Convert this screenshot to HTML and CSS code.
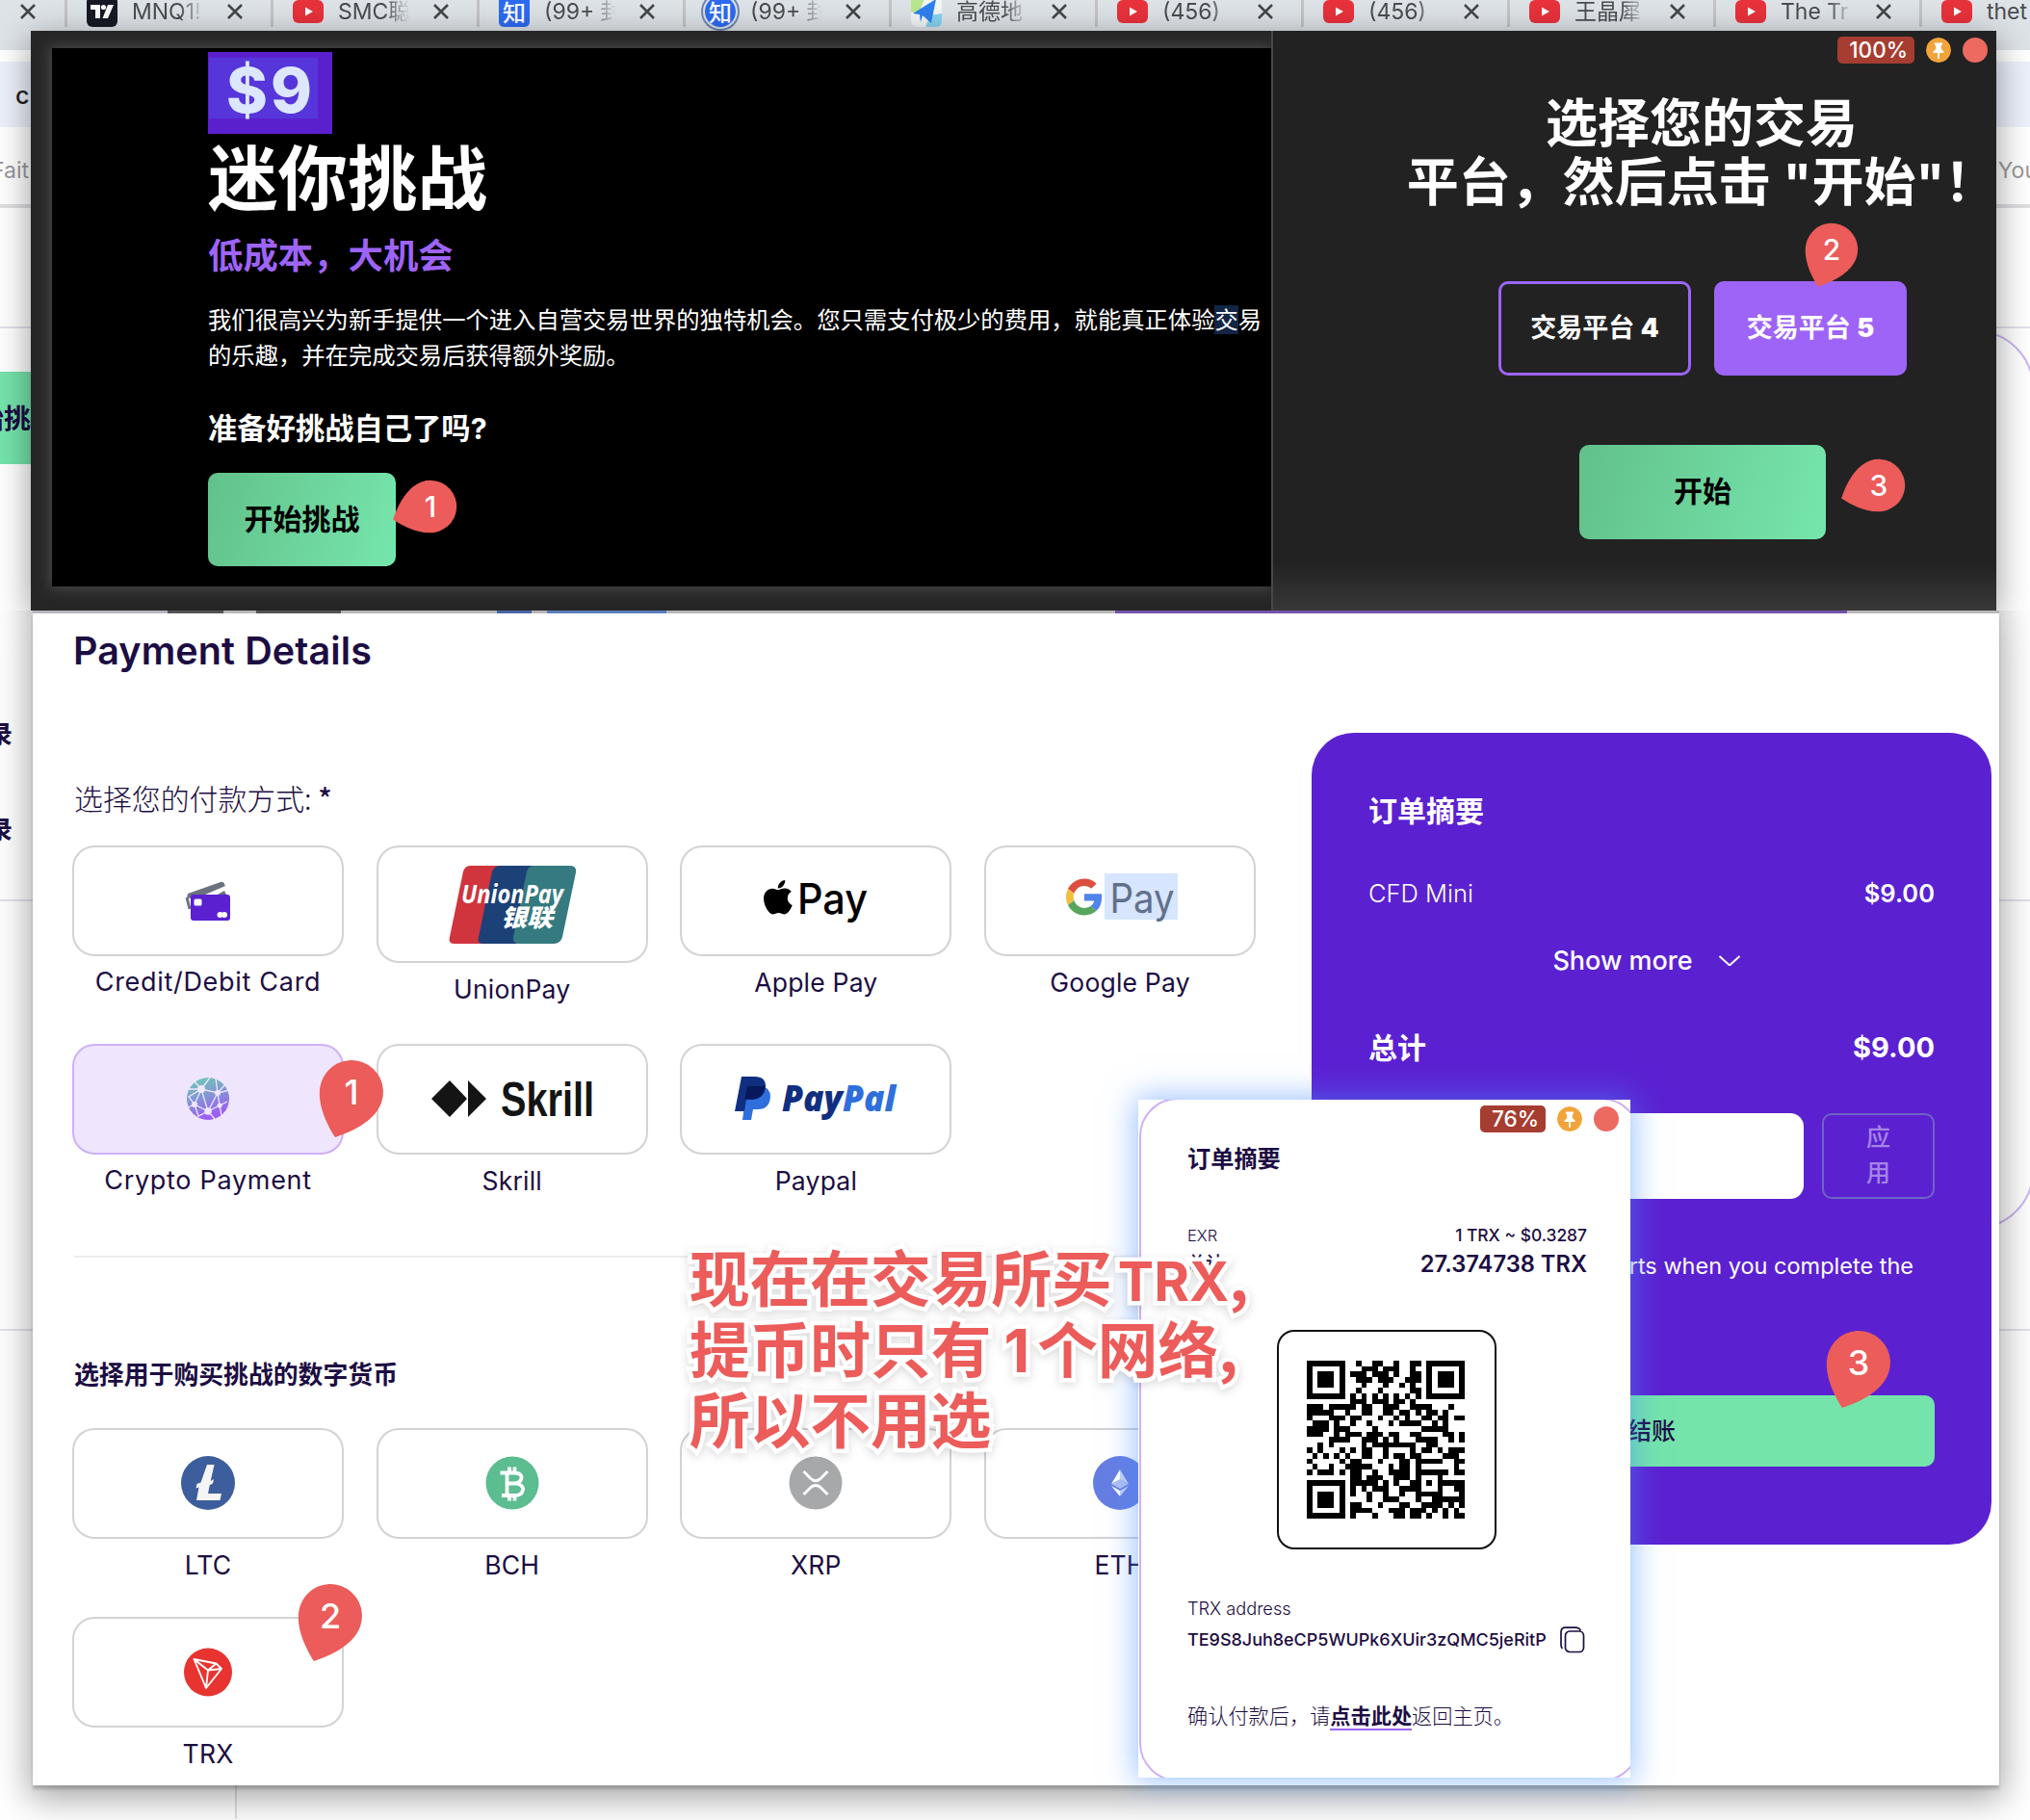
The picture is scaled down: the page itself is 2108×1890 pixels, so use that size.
FILE: index.html
```html
<!DOCTYPE html>
<html lang="zh-CN">
<head>
<meta charset="utf-8">
<title>Payment Details</title>
<link rel="stylesheet" href="styles.css">
</head>
<body>
<svg class="defs" width="0" height="0" aria-hidden="true">
  <defs>
    <symbol id="close" viewBox="0 0 16 16"><path d="M1 1L15 15M15 1L1 15" stroke="#44474a" stroke-width="2.6" fill="none"/></symbol>
    <symbol id="yt" viewBox="0 0 32 24"><rect width="32" height="24" rx="6" fill="#e8323c"/><path d="M13 7.500L21 12L13 16.500Z" fill="#fff"/></symbol>
    <symbol id="drop" viewBox="-34 -34 68 86"><path d="M0 50C-13 40-33 21-33 0A33 33 0 0 1 33 0C33 21 13 40 0 50Z" fill="#eb5c5a"/></symbol>
    <symbol id="pin" viewBox="0 0 26 26"><circle cx="13" cy="13" r="13" fill="#f2a43a"/><path d="M9 5.500H17V7.500L15.800 8.500V12L18.500 14.500V16H14V21L13 22.500L12 21V16H7.500V14.500L10.200 12V8.500L9 7.500Z" fill="#fff"/></symbol>
    <linearGradient id="globe" x1="0" y1="0" x2=".35" y2="1"><stop offset="0" stop-color="#6cd3ae"/><stop offset=".45" stop-color="#7f9fd0"/><stop offset="1" stop-color="#9c5cf5"/></linearGradient>
  </defs>
</svg>

<div class="browser">
  <div class="tabs">
    <div class="tab tab-first"><svg class="x"><use href="#close"/></svg></div>
    <div class="tab"><svg class="fav" viewBox="0 0 32 32"><rect width="32" height="32" rx="6" fill="#171a24"/><path d="M4 9H14V23H9V14H4ZM22 9H28L22 23H16.500Z" fill="#fff"/><circle cx="17.500" cy="11.500" r="2.600" fill="#fff"/></svg><span class="name">MNQ1!</span><svg class="x"><use href="#close"/></svg></div>
    <div class="tab"><svg class="fav yt"><use href="#yt"/></svg><span class="name">SMC聪</span><svg class="x"><use href="#close"/></svg></div>
    <div class="tab"><span class="fav zhi">知</span><span class="name">(99+ 封</span><svg class="x"><use href="#close"/></svg></div>
    <div class="tab"><span class="fav zhi zhi-round">知</span><span class="name">(99+ 封</span><svg class="x"><use href="#close"/></svg></div>
    <div class="tab"><svg class="fav" viewBox="0 0 32 32"><rect width="32" height="32" rx="7" fill="#f2f6f5"/><path d="M0 16V6Q0 0 6 0H15L8 18Z" fill="#b9e78d"/><path d="M15 32L20 20L32 18V26Q32 32 26 32Z" fill="#87d3ef"/><path d="M2 18L26 3L21 28L12 20L10 27L9 19Z" fill="#2f80ef"/></svg><span class="name">高德地</span><svg class="x"><use href="#close"/></svg></div>
    <div class="tab"><svg class="fav yt"><use href="#yt"/></svg><span class="name">(456)</span><svg class="x"><use href="#close"/></svg></div>
    <div class="tab"><svg class="fav yt"><use href="#yt"/></svg><span class="name">(456)</span><svg class="x"><use href="#close"/></svg></div>
    <div class="tab"><svg class="fav yt"><use href="#yt"/></svg><span class="name">王晶犀</span><svg class="x"><use href="#close"/></svg></div>
    <div class="tab"><svg class="fav yt"><use href="#yt"/></svg><span class="name">The Tr</span><svg class="x"><use href="#close"/></svg></div>
    <div class="tab"><svg class="fav yt"><use href="#yt"/></svg><span class="name solid">thet</span></div>
  </div>
  <div class="addressbar"><span>c</span></div>
  <div class="bookmarks"><span>Fait</span><span class="you">You</span></div>
  <div class="site">
    <div class="site-nav"></div>
    <div class="site-cta"><span>始挑</span></div>
    <div class="site-item">录</div>
    <div class="site-item second">录</div>
    <div class="site-line"></div>
    <div class="site-line low"></div>
    <div class="site-foot"></div>
    <div class="site-card"></div>
  </div>
</div>

<section class="promo">
  <div class="hero">
    <div class="price"><span>$9</span></div>
    <h2>迷你挑战</h2>
    <h3>低成本，大机会</h3>
    <p>我们很高兴为新手提供一个进入自营交易世界的独特机会。您只需支付极少的费用，就能真正体验<mark>交</mark>易<br>的乐趣，并在完成交易后获得额外奖励。</p>
    <h4>准备好挑战自己了吗?</h4>
    <div class="green">开始挑战</div>
  </div>
  <div class="choose">
    <div class="bar"><span>100%</span><svg><use href="#pin"/></svg><i></i></div>
    <h2>选择您的交易<br>平台，然后点击 "开始"！</h2>
    <div class="platforms"><div>交易平台 <b>4</b></div><div class="on">交易平台 <b>5</b></div></div>
    <div class="green">开始</div>
  </div>
  <span class="drop p1"><svg><use href="#drop"/></svg><i>1</i></span>
  <span class="drop p2"><svg><use href="#drop"/></svg><i>2</i></span>
  <span class="drop p3"><svg><use href="#drop"/></svg><i>3</i></span>
</section>

<main class="pay">
  <div class="strip"></div>
  <h1>Payment Details</h1>
  <div class="cols">
    <section class="left">
      <p class="ask">选择您的付款方式: <b>*</b></p>
      <div class="grid methods">
        <div class="item"><div class="tile">
          <svg viewBox="0 0 282 115"><path d="M119 55L120 50L154 38Q157 37 158 40L159 42L131 54Z" fill="#6c7180"/><path d="M119 54L122 66" stroke="#6c7180" stroke-width="3"/><path d="M149 52L158 47L161 53H149Z" fill="#6c7180"/><rect x="123" y="51" width="41" height="27" rx="3" fill="#5b21d1"/><rect x="126.500" y="55.500" width="8" height="7" rx="1.500" fill="#fff"/><circle cx="153.500" cy="72" r="3" fill="#fff"/><circle cx="158" cy="72" r="3" fill="#fff"/></svg>
        </div><span class="wide">Credit/Debit Card</span></div>
        <div class="item"><div class="tile tall">
          <svg viewBox="0 0 282 122"><path d="M97 21H130L112 102H81Q74 102 76 95L90 27Q92 21 97 21Z" fill="#d0343d"/><path d="M129 21H166L146 102H111Q104 102 106 95L120 27Q122 21 129 21Z" fill="#1b4177"/><path d="M163 21H201Q208 21 207 28L193 95Q191 102 184 102H148Q141 102 142 95L156 27Q158 21 163 21Z" fill="#357a80"/><text x="88" y="60" class="union" textLength="106" lengthAdjust="spacingAndGlyphs">UnionPay</text><text x="129" y="84" class="yinlian" textLength="54" lengthAdjust="spacingAndGlyphs">银联</text></svg>
        </div><span>UnionPay</span></div>
        <div class="item"><div class="tile">
          <svg viewBox="0 0 282 115"><path transform="translate(86.700 33.600) scale(.0788)" d="M318.700 268.700c-.2-36.700 16.400-64.400 50-84.800-18.800-26.900-47.200-41.700-84.700-44.600-35.500-2.800-74.300 20.700-88.500 20.700-15 0-49.400-19.700-76.400-19.700C63.300 141.200 4 184.800 4 273.500q0 39.300 14.400 81.200c12.800 36.700 59 126.700 107.200 125.200 25.200-.6 43-17.900 75.800-17.900 31.800 0 48.300 17.900 76.400 17.900 48.600-.7 90.400-82.500 102.600-119.300-65.200-30.700-61.700-90-61.700-91.900zm-56.600-164.200c27.300-32.400 24.800-61.900 24-72.500-24.100 1.400-52 16.400-67.900 34.900-17.500 19.800-27.800 44.300-25.600 71.900 26.100 2 49.900-11.400 69.500-34.300z"/><text x="122" y="70.500" class="apay" textLength="73" lengthAdjust="spacingAndGlyphs">Pay</text></svg>
        </div><span>Apple Pay</span></div>
        <div class="item"><div class="tile">
          <svg viewBox="0 0 282 115"><g transform="translate(85 34.500) scale(.79)"><path fill="#dc4e3f" d="M24 9.500c3.540 0 6.710 1.220 9.210 3.600l6.850-6.850C35.900 2.380 30.470 0 24 0 14.620 0 6.510 5.380 2.560 13.220l7.980 6.190C12.430 13.720 17.740 9.500 24 9.500z"/><path fill="#5083ec" d="M46.980 24.550c0-1.570-.15-3.090-.38-4.550H24v9.020h12.940c-.58 2.960-2.260 5.480-4.780 7.180l7.730 6c4.510-4.180 7.090-10.360 7.090-17.650z"/><path fill="#f2bf42" d="M10.530 28.590c-.48-1.450-.76-2.990-.76-4.590s.27-3.140.76-4.590l-7.980-6.190C.92 16.460 0 20.120 0 24c0 3.880.92 7.540 2.560 10.780l7.970-6.190z"/><path fill="#58a55c" d="M24 48c6.480 0 11.930-2.130 15.890-5.810l-7.730-6c-2.150 1.450-4.920 2.300-8.160 2.300-6.260 0-11.570-4.220-13.470-9.910l-7.980 6.190C6.510 42.620 14.620 48 24 48z"/></g><rect x="125" y="29" width="76" height="48" fill="#d7e5fe"/><text x="130.500" y="70" class="gpay" textLength="67" lengthAdjust="spacingAndGlyphs">Pay</text></svg>
        </div><span>Google Pay</span></div>
        <div class="item"><div class="tile active">
          <svg viewBox="0 0 282 115"><circle cx="141" cy="57" r="22" fill="url(#globe)"/><g stroke="#f0e7fe" stroke-width="1.300" fill="none"><path d="M134 47L127 39M134 47L143 35M134 47L151 51L149 36M134 47L121 55L127 63L134 47L141 70L151 51L163 48M127 63L141 70L153 64L151 51M153 64L161 60M153 64L155 74M141 70L131 75L127 63M141 70L148 78M120 66L127 63M134 47L121 47M151 51L159 42"/></g><g fill="#f0e7fe"><circle cx="134" cy="47" r="4"/><circle cx="151" cy="51" r="3"/><circle cx="127" cy="63" r="3"/><circle cx="141" cy="70" r="3.800"/><circle cx="153" cy="64" r="2.500"/></g></svg>
        </div><span class="wide">Crypto Payment</span></div>
        <div class="item"><div class="tile">
          <svg viewBox="0 0 282 115"><path d="M57 57L76 38L94 57L76 76ZM95 38L114 57L95 76Z" fill="#141414"/><text x="129" y="75" class="skrill" textLength="97" lengthAdjust="spacingAndGlyphs">Skrill</text></svg>
        </div><span>Skrill</span></div>
        <div class="item"><div class="tile">
          <svg viewBox="0 0 282 115"><path d="M72 44H84Q94 45 94 55Q93 68 81 68H76L74 79H65L69 50Z" fill="#2f6fdc"/><path d="M64 34H78Q89 34 89 44Q88 57 75 58H69L67 70H57Z" fill="#102f80"/><path d="M70 44H88.500Q87 57 75 57.500H67.500Z" fill="#08185c"/><text x="106" y="70" class="paypal" textLength="118" lengthAdjust="spacingAndGlyphs"><tspan fill="#102f80">Pay</tspan><tspan fill="#2f6fdc">Pal</tspan></text></svg>
        </div><span>Paypal</span></div>
      </div>
      <hr>
      <h2>选择用于购买挑战的数字货币</h2>
      <div class="grid coins">
        <div class="item"><div class="tile">
          <svg viewBox="0 0 282 115"><circle cx="141" cy="57" r="28" fill="#3d5e9c"/><path d="M140 38H147.500L142.500 60.500L141 68H155L153.500 75H129L131.500 61.500L128.500 62.500L129.500 58L133.500 56.500ZM142 56L147 53L146 57.500L141.500 60Z" fill="#f5f5f5"/></svg>
        </div><span>LTC</span></div>
        <div class="item"><div class="tile">
          <svg viewBox="0 0 282 115"><circle cx="141" cy="57" r="27.500" fill="#5bbd90"/><path d="M128.500 46.500H144Q151 47 150.500 52Q149.500 56.500 145 57M135 57.500H145Q152.500 59 152 64Q151 70 144 70H130M135.500 46V70M138 40.500V46M143.500 40.500V46M138 70V75.500M143.500 70V75.500" fill="none" stroke="#fff" stroke-width="3.800"/></svg>
        </div><span>BCH</span></div>
        <div class="item"><div class="tile">
          <svg viewBox="0 0 282 115"><circle cx="141" cy="57" r="27.500" fill="#a6a8aa"/><path d="M128.500 45L136 52.500Q141 57 146 52.500L153.500 45M128.500 69L136 61.500Q141 57.500 146 61.500L153.500 69" fill="none" stroke="#fff" stroke-width="3"/></svg>
        </div><span>XRP</span></div>
        <div class="item"><div class="tile">
          <svg viewBox="0 0 282 115"><circle cx="141" cy="57" r="28" fill="#657ee2"/><path d="M141 43L132 58L141 53.500Z" fill="#fff"/><path d="M141 43L150 58L141 53.500Z" fill="#c8d1f6"/><path d="M132 58L141 53.500L150 58L141 63Z" fill="#b2c0f3"/><path d="M132 60L141 65V71Z" fill="#fff"/><path d="M150 60L141 65V71Z" fill="#c8d1f6"/></svg>
        </div><span>ETH</span></div>
        <div class="item"><div class="tile">
          <svg viewBox="0 0 282 115"><circle cx="141" cy="57.500" r="25" fill="#e73430"/><path d="M126.500 44L149.500 48.500L155 54L139 74ZM126.500 44L141 55.500L149.500 48.500M141 55.500L155 54M141 55.500L139 74" fill="none" stroke="#fff" stroke-width="1.900" stroke-linejoin="round"/></svg>
        </div><span>TRX</span></div>
      </div>
    </section>
    <aside class="order">
      <h2>订单摘要</h2>
      <div class="line"><span class="cfd">CFD Mini</span><b>$9.00</b></div>
      <div class="more"><span>Show more</span><svg viewBox="0 0 24 14"><path d="M1.500 2L11 10.600Q12 11.400 13 10.600L22.500 2" fill="none" stroke="#fff" stroke-width="2"/></svg></div>
      <div class="line total"><b>总计</b><b>$9.00</b></div>
      <div class="coupon"><div class="input"></div><div class="apply">应<br>用</div></div>
      <p>starts when you complete the</p>
      <div class="checkout">结账</div>
    </aside>
  </div>
  <span class="drop big m1"><svg><use href="#drop"/></svg><i>1</i></span>
  <span class="drop big m2"><svg><use href="#drop"/></svg><i>2</i></span>
  <span class="drop big m3"><svg><use href="#drop"/></svg><i>3</i></span>
</main>

<section class="popup">
  <div class="outline"></div>
  <div class="bar"><span>76%</span><svg><use href="#pin"/></svg><i></i></div>
  <h2>订单摘要</h2>
  <div class="rate"><span>EXR</span><b>1 TRX ~ $0.3287</b></div>
  <div class="rate amount"><span>总计</span><b>27.374738 TRX</b></div>
  <div class="qr"><svg viewBox="0 0 29 29" shape-rendering="crispEdges"><path id="qr-path"/></svg></div>
  <p class="addr-label">TRX address</p>
  <div class="addr"><b id="address">TE9S8Juh8eCP5WUPk6XUir3zQMC5jeRitP</b><svg viewBox="0 0 26 28"><rect x="5.500" y="5" width="19" height="21.500" rx="4.500" fill="none" stroke="#1c0d42" stroke-width="1.700"/><path d="M2.500 23Q1 21.500 1 19V6Q1 1.200 5.500 1.200H16Q20 1.200 21.500 4.500" fill="none" stroke="#1c0d42" stroke-width="1.700"/></svg></div>
  <p class="back">确认付款后，请<b>点击此处</b>返回主页。</p>
</section>

<div class="note">现在在交易所买<em class="trx">TRX</em>,<br>提币时只有<em class="one">1</em>个网络,<br>所以不用选</div>
<script src="qr.js"></script>
</body>
</html>
```
FILE: styles.css
```css
* { box-sizing: border-box; margin: 0; padding: 0; }
body {
  position: relative; width: 2108px; height: 1890px; overflow: hidden; background: #fff;
  font-family: Inter, "Noto Sans CJK SC", sans-serif; color: #1c0d42;
}
i, em { font-style: normal; }
.defs { position: absolute; }

/* browser behind the windows */
.browser { height: 1890px; }
.tabs { display: flex; height: 52px; background: #dee3e8; }
.tab { display: flex; flex: none; width: 214px; height: 28px; border-right: 3px solid #c4c4c6; position: relative; padding-left: 20px; }
.tab-first { width: 70px; }
.tab:last-child { border: 0; }
.fav { flex: none; width: 32px; height: 32px; margin-top: -4px; }
.fav.yt { height: 24px; margin-top: 0; }
.zhi { background: #2d6bf3; color: #fff; border-radius: 5px; font: 500 24px/32px "Noto Sans CJK SC", sans-serif; text-align: center; }
.zhi-round { border-radius: 50%; box-shadow: 0 0 0 2px #dee3e8, 0 0 0 4px #7286b4; }
.name {
  width: 76px; margin-left: 15px; overflow: hidden; white-space: nowrap;
  font: 400 23px/28px Inter, "Noto Sans CJK SC", sans-serif; height: 28px; margin-top: -2px; color: #4a4d50;
  -webkit-mask-image: linear-gradient(90deg, #000 65%, transparent 98%);
}
.name.solid { -webkit-mask-image: none; }
.x { position: absolute; right: 29px; top: 4px; width: 16px; height: 16px; }
.tab-first .x { right: 30px; }
.addressbar { height: 80px; border-top: 12px solid #fff; background: #ecf1fb; font: 500 25px/70px Inter, sans-serif; padding-left: 16px; color: #222; }
.bookmarks { display: flex; justify-content: space-between; height: 84px; border-bottom: 4px solid #dfdfe2; font: 400 23px/90px Inter, sans-serif; color: #9a9a9c; }
.bookmarks span { margin-left: -9px; }
.bookmarks .you { margin-right: -8px; }
.site { position: relative; height: 1674px; }
.site-nav { height: 125px; border-bottom: 2px solid #e3e1ea; }
.site-cta { height: 96px; margin-top: 45px; width: 40px; background: #75e4ab; font: 700 28px/94px "Noto Sans CJK SC", sans-serif; }
.site-cta span { display: block; margin-left: -24px; width: 60px; }
.site-item { height: 40px; margin: 259px 0 0 -13px; font: 700 26px/40px "Noto Sans CJK SC", sans-serif; }
.site-item.second { margin-top: 59px; }
.site-line { height: 2px; margin-top: 54px; background: #e3e1ea; }
.site-line.low { margin-top: 444px; }
.site-foot { width: 246px; height: 507px; border-right: 2px solid #e0e0e3; }
.site-card { position: absolute; left: 1600px; top: 127px; width: 512px; height: 933px; border: 2px solid #ccb5f3; border-radius: 60px; }

/* promo window */
.promo { position: absolute; left: 32px; top: 32px; width: 2041px; height: 602px; display: flex; background: #262626; box-shadow: 0 8px 34px rgba(0,0,0,.42); }
.hero { flex: none; width: 1266px; height: 559px; margin: 18px 0 0 22px; padding: 4px 0 0 162px; background: #000; color: #fff; box-shadow: 0 0 14px 2px #4c4c4c; clip-path: inset(-18px 0 -25px -22px); }
.price { width: 129px; height: 85px; background: #5b20ce; padding: 6px 0 0 1px; }
.price span { display: block; width: 113px; height: 63px; background: #5636da; color: #dce7ff; font: 800 65px/67px Inter, sans-serif; padding-left: 18px; letter-spacing: 3px; }
.hero h2 { font-size: 72.500px; line-height: 90px; font-weight: 700; margin-top: 2px; }
.hero h3 { font-size: 36.400px; line-height: 50px; font-weight: 700; color: #9e64f7; margin-top: 10px; }
.hero p { font-size: 24.320px; line-height: 36.500px; margin-top: 23px; white-space: nowrap; }
.hero mark { background: #122544; color: inherit; }
.hero h4 { font-size: 30.300px; line-height: 40px; font-weight: 700; margin-top: 38px; }
.green { width: 195px; height: 97px; border-radius: 10px; background: linear-gradient(105deg, #62c18a, #76e6ad); color: #000; font-size: 30px; line-height: 97px; font-weight: 700; text-align: center; }
.hero .green { margin-top: 26px; }
.choose { flex: 1; min-width: 0; border-left: 2px solid #484848; background: linear-gradient(#222 92%, #383838); color: #fff; }
.bar { display: flex; align-items: center; justify-content: flex-end; gap: 12px; height: 28px; }
.bar span { height: 28px; padding: 0 7px 0 12px; border-radius: 5px; background: #a63d31; color: #fff; font: 500 22.500px/28px Inter, sans-serif; text-align: right; }
.bar svg, .bar i { width: 26px; height: 26px; border-radius: 50%; }
.bar i { background: #ec6a60; }
.choose .bar { margin: 6px 9px 0 0; }
.choose .bar span { width: 80px; }
.choose h2 { font-size: 54px; line-height: 61px; font-weight: 700; text-align: center; margin: 32px 0 0 105px; width: 680px; white-space: nowrap; }
.platforms { display: flex; gap: 24px; margin: 72px 0 0 234px; }
.platforms div { width: 200px; height: 98px; border: 3px solid #9e64f7; border-radius: 10px; font-size: 27px; line-height: 92px; font-weight: 700; text-align: center; }
.platforms .on { background: #9e64f7; }
.choose .green { width: 256px; height: 98px; margin: 72px 0 0 318px; }

/* checkout window */
.pay {
  position: absolute; left: 34px; top: 637px; width: 2042px; height: 1217px; padding: 15px 8px 0 43px; background: #fff;
  box-shadow: 0 4px 3px rgba(0,0,0,.18), 0 10px 34px 4px rgba(0,0,0,.35); clip-path: inset(-3px -60px -60px -60px);
}
.strip {
  position: absolute; left: 0; top: -3px; width: 2042px; height: 3px;
  background: linear-gradient(90deg, #b6b4bd 0 140px, #555 140px 198px, #b8b6b6 198px 232px, #555 232px 320px, #b8b6b6 320px 482px, #4a67a4 482px 518px, #b8b6b6 518px 534px, #5b7dbd 534px 658px, #b8b6b6 658px 1124px, #7453ab 1124px 1884px, #b8b6b6 1884px);
}
h1 { font: 600 39.500px/48px Inter, sans-serif; letter-spacing: .1px; margin-left: -1px; }
.cols { display: flex; justify-content: space-between; }
.left { width: 1229px; padding-top: 108px; margin-left: -2px; }
.ask { font: 300 29.900px/40px "Noto Sans CJK SC", sans-serif; padding-left: 2px; }
.ask b { font-weight: 500; }
.grid { display: grid; grid-template-columns: repeat(4, 282px); column-gap: 33.700px; }
.methods { margin-top: 30px; grid-auto-rows: 206px; }
.coins { margin-top: 35px; grid-auto-rows: 196px; }
.item { text-align: center; font-size: 26.500px; letter-spacing: .2px; line-height: 30px; }
.item span { display: block; margin-top: 12px; }
.item .wide { font-size: 27px; letter-spacing: .7px; }
.tile { height: 115px; border: 2px solid #d3d3d5; border-radius: 23px; }
.tile.tall { height: 122px; }
.tile.active { background: #efe6fd; border-color: #cdb0f8; }
.tile svg { display: block; width: 282px; height: 115px; margin: -2px; letter-spacing: 0; }
.tile.tall svg { height: 122px; }
hr { height: 2px; border: 0; background: #ececee; margin: 14px 0 0 2px; }
.left h2 { font-size: 25.850px; line-height: 40px; font-weight: 700; margin: 102px 0 0 2px; }
.union { font: italic 700 26px "Open Sans", sans-serif; fill: #fff; }
.yinlian { font: italic 900 25px "Noto Sans CJK SC", sans-serif; fill: #fff; }
.apay { font: 500 44px Inter, sans-serif; }
.gpay { font: 400 42px Inter, sans-serif; fill: #61708a; }
.skrill { font: 700 50px "Liberation Sans", sans-serif; fill: #141414; }
.paypal { font: italic 800 37px "Open Sans", sans-serif; }

.order { width: 706px; height: 843px; margin: 61px 0 0 0; padding: 61px 59px 0; border-radius: 44px; background: #5b21d1; color: #fff; }
.order h2 { font-size: 30px; line-height: 40px; font-weight: 700; }
.line { display: flex; justify-content: space-between; font-size: 25.500px; line-height: 40px; margin-top: 46px; }
.line b { font-weight: 600; }
.cfd { font-weight: 300; }
.more { display: flex; justify-content: center; align-items: center; gap: 26px; font-size: 27px; line-height: 40px; font-weight: 500; margin: 30px 10px 0 0; }
.more svg { width: 24px; height: 14px; }
.total { font-size: 30px; margin-top: 50px; }
.total b { font-weight: 700; }
.total b:last-child { font-size: 29px; }
.coupon { display: flex; gap: 19px; margin-top: 48px; }
.input { flex: 1; height: 89px; background: #fff; border-radius: 14px; }
.apply { width: 117px; height: 89px; border: 2px solid #6f64c4; border-radius: 10px; text-align: center; font-size: 25px; line-height: 37px; padding-top: 5px; color: #a684e6; font-weight: 500; }
.order p { font-size: 23.500px; line-height: 36px; margin: 52px 22px 0 0; text-align: right; }
.checkout { height: 74px; margin-top: 116px; border-radius: 10px; background: #75e4ab; color: #1c0d42; font-size: 25px; font-weight: 500; line-height: 74px; text-align: center; }

/* numbered markers */
.drop { position: absolute; width: 68px; height: 68px; }
.drop svg { position: absolute; left: 0; top: 0; width: 68px; height: 86px; transform-origin: 34px 34px; transform: rotate(20deg); }
.drop i { position: absolute; inset: 0; text-align: center; color: #fff; font: 500 36px/68px Inter, sans-serif; }
.m1 { left: 297px; top: 463px; }
.m2 { left: 275px; top: 1007px; }
.m3 { left: 1862px; top: 744px; }
.p1, .p2, .p3 { width: 56px; height: 56px; }
.p1 svg, .p2 svg, .p3 svg { width: 56px; height: 70.800px; transform-origin: 28px 28px; }
.p1 svg, .p3 svg { transform: rotate(71deg); }
.p1 i, .p2 i, .p3 i { font-size: 30px; line-height: 56px; }
.p1 { left: 387px; top: 466px; }
.p2 { left: 1842px; top: 199px; }
.p3 { left: 1891px; top: 444px; }

/* payment popup */
.popup { position: absolute; left: 1182px; top: 1142px; width: 511px; height: 704px; padding: 6px 12px 0 51px; background: #fff; box-shadow: 0 0 30px 3px rgba(72,144,255,.55); }
.outline { position: absolute; inset: 0; overflow: hidden; }
.outline::before { content: ""; position: absolute; left: 1px; top: -2px; width: 516px; height: 706px; border: 2px solid #cfb0f7; border-radius: 40px; }
.popup .bar span { width: 68px; }
.popup h2 { font-size: 24.200px; line-height: 32px; font-weight: 700; margin-top: 12px; }
.rate { display: flex; justify-content: space-between; margin: 48px 33px 0 0; line-height: 30px; font-size: 17.400px; }
.rate span { font-weight: 300; font-size: 16.500px; }
.rate b { font-weight: 500; }
.rate.amount { margin-top: 0; font-size: 23.700px; }
.amount b { font-weight: 600; }
.amount span { font-size: 19px; font-weight: 500; }
.qr { width: 228px; height: 228px; margin: 53px 0 0 93px; border: 2px solid #111; border-radius: 18px; padding: 30px; }
.qr svg { display: block; width: 164px; height: 164px; margin-left: -1px; }
.addr-label { font-size: 18.200px; font-weight: 300; line-height: 30px; margin-top: 46px; }
.addr { display: flex; align-items: center; justify-content: space-between; line-height: 30px; font-size: 17.980px; margin: 3px 35px 0 0; }
.addr b { font-weight: 500; white-space: nowrap; }
.addr svg { width: 26px; height: 28px; }
.back { font-size: 21.200px; font-weight: 300; line-height: 30px; margin-top: 49px; }
.back b { font-weight: 700; border-bottom: 2px solid #9e64f7; }

/* annotation over the windows */
.note {
  position: absolute; left: 716px; top: 1287px; white-space: nowrap; color: #eb5c5a;
  font: 700 62.700px/73.700px "Noto Sans CJK SC", sans-serif;
  -webkit-text-stroke: 9px #fff; paint-order: stroke fill; filter: drop-shadow(0 3px 5px rgba(0,0,0,.14));
}
.note em { font-family: Inter, sans-serif; font-size: 57px; line-height: 0; }
.note .trx { margin-left: 6px; font-size: 56px; }
.note .one { margin: 0 8px 0 13px; font-size: 62px; }
```
FILE: qr.js
```javascript
// Byte-mode QR symbol, version 3, error correction L, mask 0.
(function () {
  var text = document.getElementById('address').textContent;
  var N = 29, DATA = 55, ECC = 15, FORMAT = 0x77c4;

  var bits = [];
  function push(v, n) { for (var i = n - 1; i >= 0; i--) bits.push((v >> i) & 1); }
  push(4, 4);
  push(text.length, 8);
  for (var i = 0; i < text.length; i++) push(text.charCodeAt(i), 8);
  push(0, 4);
  while (bits.length % 8) bits.push(0);
  for (var pad = 0xec; bits.length < DATA * 8; pad ^= 0xfd) push(pad, 8);

  function mul(a, b) {
    var r = 0;
    for (var k = 7; k >= 0; k--) { r = (r << 1) ^ ((r >> 7) * 0x11d); r ^= ((b >> k) & 1) * a; }
    return r;
  }
  var gen = [], root = 1;
  for (i = 0; i < ECC - 1; i++) gen.push(0);
  gen.push(1);
  for (i = 0; i < ECC; i++) {
    for (var j = 0; j < ECC; j++) { gen[j] = mul(gen[j], root); if (j + 1 < ECC) gen[j] ^= gen[j + 1]; }
    root = mul(root, 2);
  }
  var rem = gen.map(function () { return 0; });
  for (i = 0; i < DATA; i++) {
    var factor = parseInt(bits.slice(i * 8, i * 8 + 8).join(''), 2) ^ rem.shift();
    rem.push(0);
    for (j = 0; j < ECC; j++) rem[j] ^= mul(gen[j], factor);
  }
  rem.forEach(function (v) { push(v, 8); });

  var m = [], fixed = [], x, y;
  for (y = 0; y < N; y++) { m.push(new Array(N).fill(0)); fixed.push(new Array(N).fill(false)); }
  function set(cx, cy, v) { if (cx >= 0 && cy >= 0 && cx < N && cy < N) { m[cy][cx] = v ? 1 : 0; fixed[cy][cx] = true; } }
  for (i = 0; i < N; i++) { set(6, i, i % 2 === 0); set(i, 6, i % 2 === 0); }
  [[3, 3], [N - 4, 3], [3, N - 4]].forEach(function (c) {
    for (var dy = -4; dy <= 4; dy++) for (var dx = -4; dx <= 4; dx++) {
      var d = Math.max(Math.abs(dx), Math.abs(dy));
      set(c[0] + dx, c[1] + dy, d !== 2 && d !== 4);
    }
  });
  for (y = -2; y <= 2; y++) for (x = -2; x <= 2; x++) set(22 + x, 22 + y, Math.max(Math.abs(x), Math.abs(y)) !== 1);
  function f(k) { return (FORMAT >> k) & 1; }
  for (i = 0; i < 6; i++) set(8, i, f(i));
  set(8, 7, f(6)); set(8, 8, f(7)); set(7, 8, f(8));
  for (i = 9; i < 15; i++) set(14 - i, 8, f(i));
  for (i = 0; i < 8; i++) set(N - 1 - i, 8, f(i));
  for (i = 8; i < 15; i++) set(8, N - 15 + i, f(i));
  set(8, N - 8, 1);

  var n = 0;
  for (var right = N - 1; right >= 1; right -= 2) {
    if (right === 6) right = 5;
    for (var v = 0; v < N; v++) for (j = 0; j < 2; j++) {
      x = right - j;
      y = ((right + 1) & 2) === 0 ? N - 1 - v : v;
      if (!fixed[y][x]) { m[y][x] = (bits[n++] || 0) ^ ((x + y) % 2 === 0 ? 1 : 0); }
    }
  }
  var d = '';
  for (y = 0; y < N; y++) for (x = 0; x < N; x++) if (m[y][x]) d += 'M' + x + ' ' + y + 'h1v1h-1z';
  document.getElementById('qr-path').setAttribute('d', d);
})();
```
